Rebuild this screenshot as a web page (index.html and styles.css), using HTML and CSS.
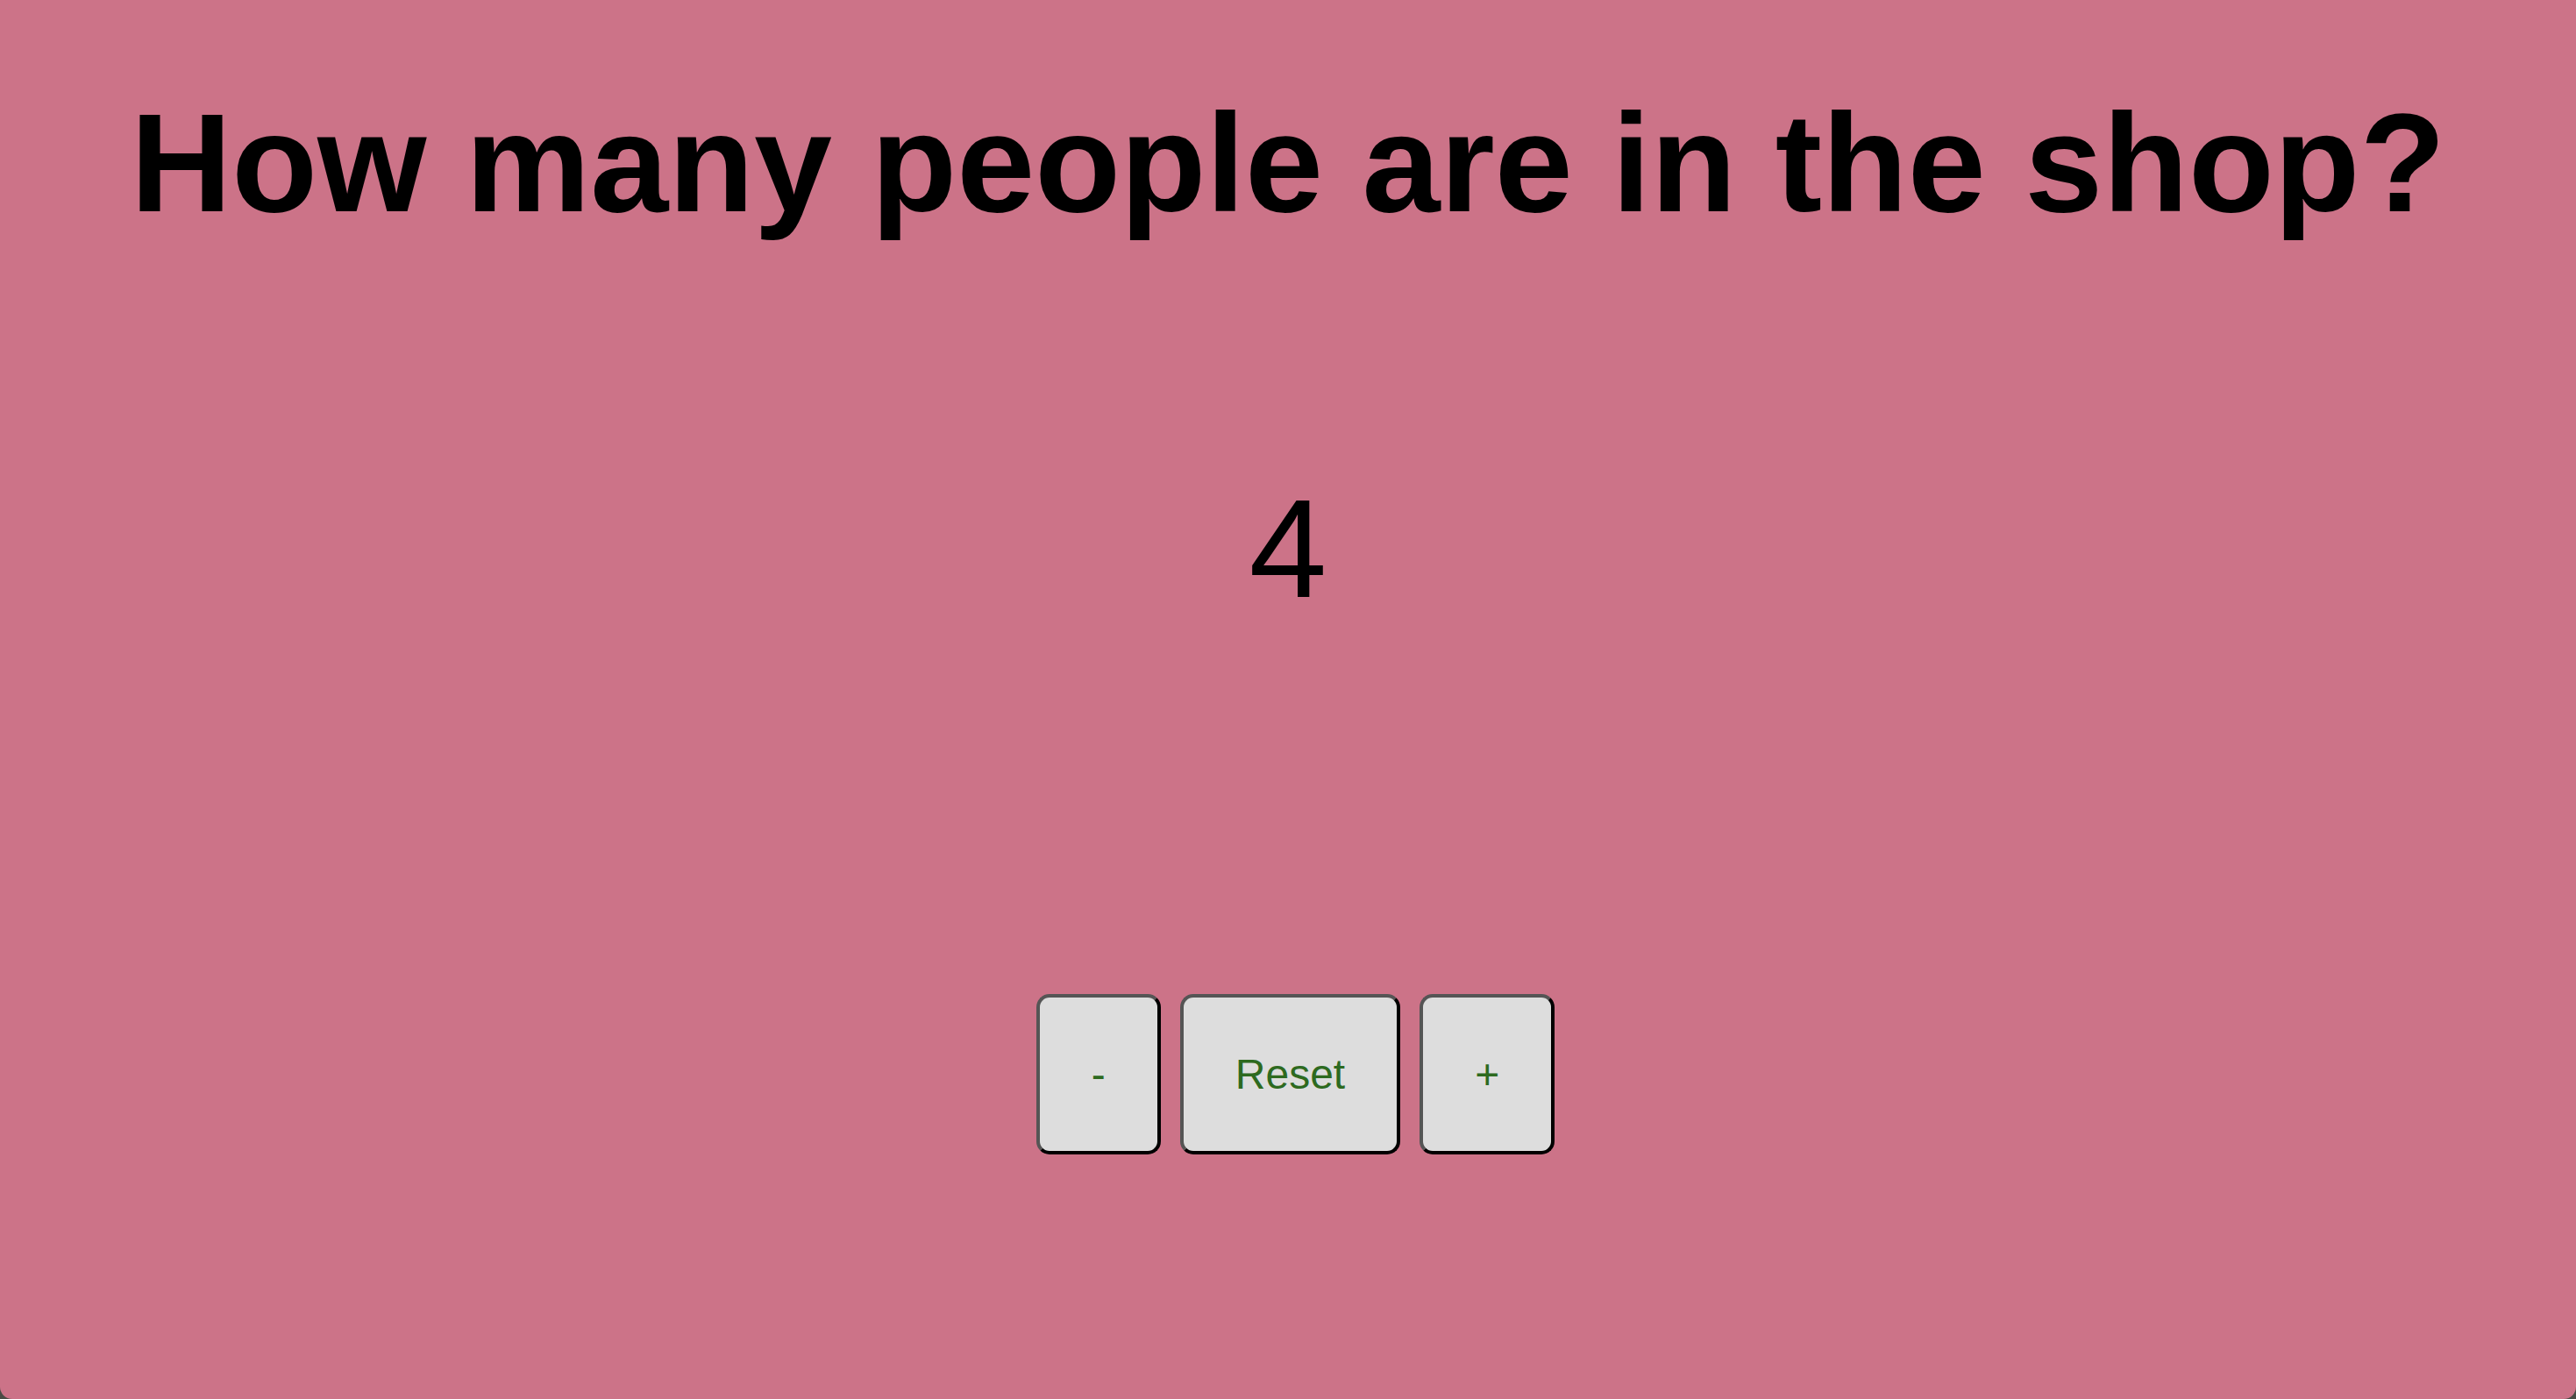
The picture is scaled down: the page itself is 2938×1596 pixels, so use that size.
FILE: index.html
```html
<!DOCTYPE html>
<html lang="en">
<head>
<meta charset="utf-8">
<title>People counter</title>
<link rel="stylesheet" href="styles.css">
</head>
<body>
<main class="app">
  <h1 class="title">How many people are in the shop?</h1>
  <div class="count">4</div>
  <div class="controls">
    <button class="btn" type="button">-</button>
    <button class="btn" type="button">Reset</button>
    <button class="btn" type="button">+</button>
  </div>
</main>
</body>
</html>
```
FILE: styles.css
```css
html, body {
  margin: 0;
  padding: 0;
  height: 100%;
}
body {
  background: #4b4b45;
  font-family: "Liberation Sans", Arial, sans-serif;
}
.app {
  box-sizing: border-box;
  height: 1596px;
  background: #cc7388;
  border-radius: 0 0 14px 14px;
  display: flex;
  flex-direction: column;
  align-items: center;
  padding-top: 94px;
}
.title {
  margin: 0;
  font-size: 160px;
  font-weight: bold;
  line-height: 184px;
  color: #000;
}
.count {
  margin-top: 256px;
  font-size: 160px;
  line-height: 184px;
  color: #000;
}
.controls {
  margin-top: 416px;
  margin-left: 17px;
  display: flex;
  gap: 22px;
}
.btn {
  font-family: "Liberation Sans", Arial, sans-serif;
  font-size: 48px;
  line-height: 55px;
  padding: 60px 59px;
  color: #2d6a1f;
  background: #dddddd;
  border: 4px solid;
  border-color: #555 #000 #000 #555;
  border-radius: 15px;
}
```
